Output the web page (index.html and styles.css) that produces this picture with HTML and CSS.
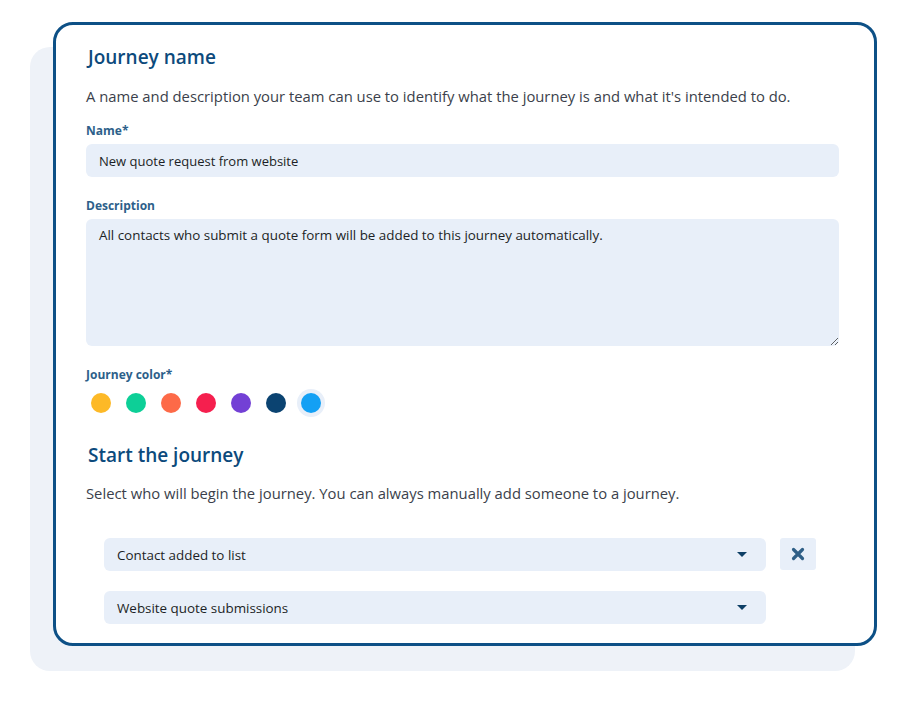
FILE: index.html
```html
<!DOCTYPE html>
<html lang="en">
<head>
    <meta charset="UTF-8">
    <meta name="viewport" content="width=device-width, initial-scale=1.0">
    <link rel="stylesheet" href="styles.css">
</head>
<body>
    <div class="stage">
        <div class="journeyCard">
            <h2 class="sectionTitle">Journey name</h2>
            <p class="sectionText">A name and description your team can use to identify what the journey is and what it's intended to do.</p>

            <label class="fieldLabel" for="journeyName">Name*</label>
            <input class="fieldInput" id="journeyName" type="text" value="New quote request from website">

            <label class="fieldLabel descLabel" for="journeyDesc">Description</label>
            <textarea class="fieldInput fieldArea" id="journeyDesc">All contacts who submit a quote form will be added to this journey automatically.</textarea>

            <div class="fieldLabel colorLabel">Journey color*</div>
            <div class="colorRow">
                <span class="swatch"><span class="dot" style="background:#fdb927"></span></span>
                <span class="swatch"><span class="dot" style="background:#0dcf97"></span></span>
                <span class="swatch"><span class="dot" style="background:#fd6a48"></span></span>
                <span class="swatch"><span class="dot" style="background:#f51f4e"></span></span>
                <span class="swatch"><span class="dot" style="background:#7340d5"></span></span>
                <span class="swatch"><span class="dot" style="background:#0b4371"></span></span>
                <span class="swatch selected"><span class="dot" style="background:#13a0f4"></span></span>
            </div>

            <h2 class="sectionTitle startTitle">Start the journey</h2>
            <p class="sectionText startText">Select who will begin the journey. You can always manually add someone to a journey.</p>

            <div class="triggerList">
                <div class="triggerRow">
                    <div class="selectBox">
                        <span>Contact added to list</span>
                        <span class="caret"></span>
                    </div>
                    <button class="removeBtn">
                        <svg width="14" height="14" viewBox="0 0 14 14">
                            <path d="M2.5 2.5 L11.5 11.5 M11.5 2.5 L2.5 11.5" stroke="#2f5f87" stroke-width="3.2" stroke-linecap="round"/>
                        </svg>
                    </button>
                </div>
                <div class="triggerRow">
                    <div class="selectBox">
                        <span>Website quote submissions</span>
                        <span class="caret"></span>
                    </div>
                </div>
            </div>
        </div>
    </div>
</body>
</html>
```

FILE: styles.css
```css
body {
    margin: 0px;
    background-color: #ffffff;
    font-family: "Open Sans", Lato, Arial, sans-serif;
}
.stage {
    isolation: isolate;
    padding: 22px 0 56px 53px;
}
.journeyCard {
    position: relative;
    box-sizing: border-box;
    width: 824px;
    height: 624px;
    padding: 20px 36px 0 30px;
    background-color: #ffffff;
    border: 3px solid #0d5086;
    border-radius: 20px;
}
/* soft panel sitting behind the card */
.journeyCard::before {
    content: '';
    position: absolute;
    left: -26px;
    top: 22px;
    width: 825px;
    height: 624px;
    background-color: #eef2f8;
    border-radius: 20px;
    z-index: -1;
}
.sectionTitle {
    margin: 0 0 0 2px;
    font-size: 19px;
    line-height: 24px;
    font-weight: 600;
    color: #0c4a7c;
}
.sectionText {
    margin: 17px 0 0 0;
    font-size: 14.8px;
    line-height: 20px;
    color: #3b3f4b;
}
.fieldLabel {
    display: block;
    margin-top: 17px;
    font-size: 12px;
    line-height: 16px;
    font-weight: 700;
    color: #2d5f8a;
}
.descLabel,
.colorLabel {
    margin-top: 21px;
}
.fieldInput {
    display: block;
    box-sizing: border-box;
    width: 753px;
    height: 33px;
    margin-top: 5px;
    padding: 0 13px;
    border: none;
    border-radius: 6px;
    background-color: #e8eff9;
    font-family: "Open Sans", Lato, Arial, sans-serif;
    font-size: 13px;
    color: #1c1f26;
    outline: none;
}
.fieldArea {
    height: 127px;
    padding-top: 8px;
    font-size: 13.4px;
    line-height: 17px;
    resize: vertical;
}
.colorRow {
    display: flex;
    gap: 7px;
    margin-top: 6px;
    padding-left: 1px;
}
.swatch {
    display: flex;
    align-items: center;
    justify-content: center;
    width: 28px;
    height: 28px;
    border-radius: 50%;
}
.swatch.selected {
    background-color: #e8eff9;
}
.dot {
    width: 20px;
    height: 20px;
    border-radius: 50%;
}
.startTitle {
    margin-top: 26px;
}
.startText {
    margin-top: 16px;
}
.triggerList {
    display: flex;
    flex-direction: column;
    gap: 20px;
    margin-top: 35px;
    padding-left: 18px;
}
.triggerRow {
    display: flex;
    align-items: flex-start;
    gap: 14px;
}
.selectBox {
    display: flex;
    align-items: center;
    justify-content: space-between;
    box-sizing: border-box;
    width: 662px;
    height: 33px;
    padding: 0 19px 0 13px;
    border-radius: 6px;
    background-color: #e8eff9;
    font-size: 13.4px;
    color: #1c1f26;
}
.caret {
    width: 0;
    height: 0;
    border-left: 5px solid transparent;
    border-right: 5px solid transparent;
    border-top: 5px solid #0d3f66;
}
.removeBtn {
    display: flex;
    align-items: center;
    justify-content: center;
    width: 36px;
    height: 32px;
    padding: 0;
    border: none;
    border-radius: 3px;
    background-color: #e8eff9;
}
```
